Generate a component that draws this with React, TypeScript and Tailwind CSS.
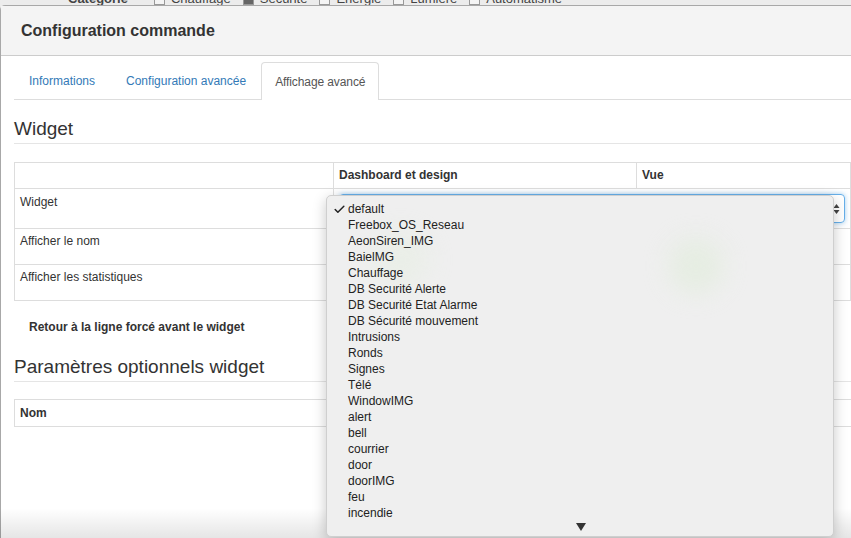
import { Check } from 'lucide-react'

const categories = [
  { label: 'Chauffage', checked: false },
  { label: 'Sécurité', checked: true },
  { label: 'Energie', checked: false },
  { label: 'Lumière', checked: false },
  { label: 'Automatisme', checked: false },
]

const widgetOptions = [
  'default',
  'Freebox_OS_Reseau',
  'AeonSiren_IMG',
  'BaielMG',
  'Chauffage',
  'DB Securité Alerte',
  'DB Securité Etat Alarme',
  'DB Sécurité mouvement',
  'Intrusions',
  'Ronds',
  'Signes',
  'Télé',
  'WindowIMG',
  'alert',
  'bell',
  'courrier',
  'door',
  'doorIMG',
  'feu',
  'incendie',
]

const SectionTitle = ({ children }: { children: string }) => (
  <h2 className="h-[29px] border-b border-[#e5e5e5] text-[19px] leading-[28px] text-[#333]">{children}</h2>
)

// Native select popup, drawn open over the table
const SelectPopup = () => (
  <div className="absolute left-[326px] top-[195px] w-[508px] h-[342px] rounded-[5px] border border-[#cfcfcf] bg-[#efefef] shadow-[0_4px_14px_rgba(0,0,0,0.22)] overflow-hidden">
    <div className="absolute left-[46px] top-[36px] w-[56px] h-[56px] rounded-full bg-[#e3eedd] opacity-40 blur-md" />
    <div className="absolute left-[341px] top-[42px] w-[56px] h-[56px] rounded-full bg-[#e0ecda] opacity-60 blur-md" />
    <ul className="relative pt-[5px]">
      {widgetOptions.map((opt, i) => (
        <li key={opt} className="flex items-center h-[16px] text-[12px] leading-[16px] text-[#222]">
          <span className="w-[21px] flex justify-end pr-[2px]">
            {i === 0 && <Check className="w-[13px] h-[13px] text-[#222]" strokeWidth={2.75} />}
          </span>
          <span>{opt}</span>
        </li>
      ))}
    </ul>
    <div className="relative flex justify-center pt-[2px] pl-[2px]">
      <svg width="10" height="8" viewBox="0 0 10 8">
        <path d="M0 0 L10 0 L5 8 Z" fill="#333" />
      </svg>
    </div>
  </div>
)

export default function App() {
  return (
    <div className="relative w-[851px] h-[538px] overflow-hidden bg-[#ececec] font-['Liberation_Sans',Arial,sans-serif] text-[#333]">
      {/* page behind the modal */}
      <div className="h-[5px] overflow-hidden">
        <div className="-mt-[8px] flex items-center gap-[8px] pl-[68px] text-[13px] leading-[14px] text-[#444]">
          <span className="font-bold mr-[18px]">Catégorie</span>
          {categories.map((c) => (
            <span key={c.label} className="flex items-center gap-[6px] mr-[4px]">
              <span className={`w-[11px] h-[11px] border border-[#999] ${c.checked ? 'bg-[#666]' : 'bg-[#f4f4f4]'}`} />
              <span>{c.label}</span>
            </span>
          ))}
        </div>
      </div>

      {/* modal */}
      <div className="h-[533px] rounded-tl-[5px] border-t border-l border-[#a8a8a8] bg-white">
        <header className="h-[50px] bg-[#f4f4f4] border-b border-[#cccccc] flex items-center px-[20px] pt-[1px]">
          <h1 className="text-[16px] font-bold text-[#333]">Configuration commande</h1>
        </header>

        <div className="pl-[13px] overflow-hidden">
          {/* tabs */}
          <nav className="mt-[6px] flex items-end border-b border-[#dddddd] text-[12px] leading-[17px]">
            <a className="px-[15px] pt-[11px] pb-[9px] mr-[2px] text-[#337ab7]">Informations</a>
            <a className="px-[14px] pt-[11px] pb-[9px] mr-[1px] text-[#337ab7]">Configuration avancée</a>
            <a className="-mb-px px-[13px] pt-[11px] pb-[9px] rounded-t-[4px] border border-b-0 border-[#dddddd] bg-white text-[#555] tracking-[-0.1px]">
              Affichage avancé
            </a>
          </nav>

          <div className="mt-[15px]">
            <SectionTitle>Widget</SectionTitle>
          </div>

          <table className="mt-[18px] table-fixed w-[1000px] border-collapse text-[12px] leading-[17px]">
            <colgroup>
              <col className="w-[319px]" />
              <col className="w-[303px]" />
              <col className="w-[214px]" />
              <col />
            </colgroup>
            <thead>
              <tr className="h-[26px]">
                <th className="border border-[#dddddd] px-[5px]" />
                <th className="border border-[#dddddd] px-[5px] text-left font-bold">Dashboard et design</th>
                <th className="border border-[#dddddd] px-[5px] text-left font-bold">Vue</th>
                <th className="border border-[#dddddd]" />
              </tr>
            </thead>
            <tbody>
              <tr className="h-[40px]">
                <td className="border border-[#dddddd] px-[5px] pt-[5px] align-top">Widget</td>
                <td colSpan={2} className="border border-[#dddddd] px-[5px] py-[5px]">
                  <div className="h-[29px] rounded-[4px] border border-[#66afe9] shadow-[0_0_5px_rgba(102,175,233,0.6)] flex items-center justify-end pr-[4px]">
                    <svg width="7" height="12" viewBox="0 0 7 12">
                      <path d="M3.5 1 L6.5 5 L0.5 5 Z M3.5 11 L6.5 7 L0.5 7 Z" fill="#444" />
                    </svg>
                  </div>
                </td>
                <td className="border border-[#dddddd]" />
              </tr>
              <tr className="h-[36px]">
                <td className="border border-[#dddddd] px-[5px] pt-[4px] align-top">Afficher le nom</td>
                <td className="border border-[#dddddd]" />
                <td className="border border-[#dddddd]" />
                <td className="border border-[#dddddd]" />
              </tr>
              <tr className="h-[36px]">
                <td className="border border-[#dddddd] px-[5px] pt-[4px] align-top">Afficher les statistiques</td>
                <td className="border border-[#dddddd]" />
                <td className="border border-[#dddddd]" />
                <td className="border border-[#dddddd]" />
              </tr>
            </tbody>
          </table>

          <p className="mt-[18px] pl-[15px] text-[12px] leading-[17px] font-bold">Retour à la ligne forcé avant le widget</p>

          <div className="mt-[17px]">
            <SectionTitle>Paramètres optionnels widget</SectionTitle>
          </div>

          <table className="mt-[17px] w-[1000px] border-collapse text-[12px] leading-[17px]">
            <thead>
              <tr className="h-[27px]">
                <th className="border border-[#dddddd] px-[5px] text-left font-bold">Nom</th>
              </tr>
            </thead>
          </table>
        </div>
      </div>

      {/* modal bottom shade */}
      <div className="absolute left-0 right-0 bottom-0 h-[30px] bg-gradient-to-b from-transparent to-black/10" />

      <SelectPopup />
    </div>
  )
}
